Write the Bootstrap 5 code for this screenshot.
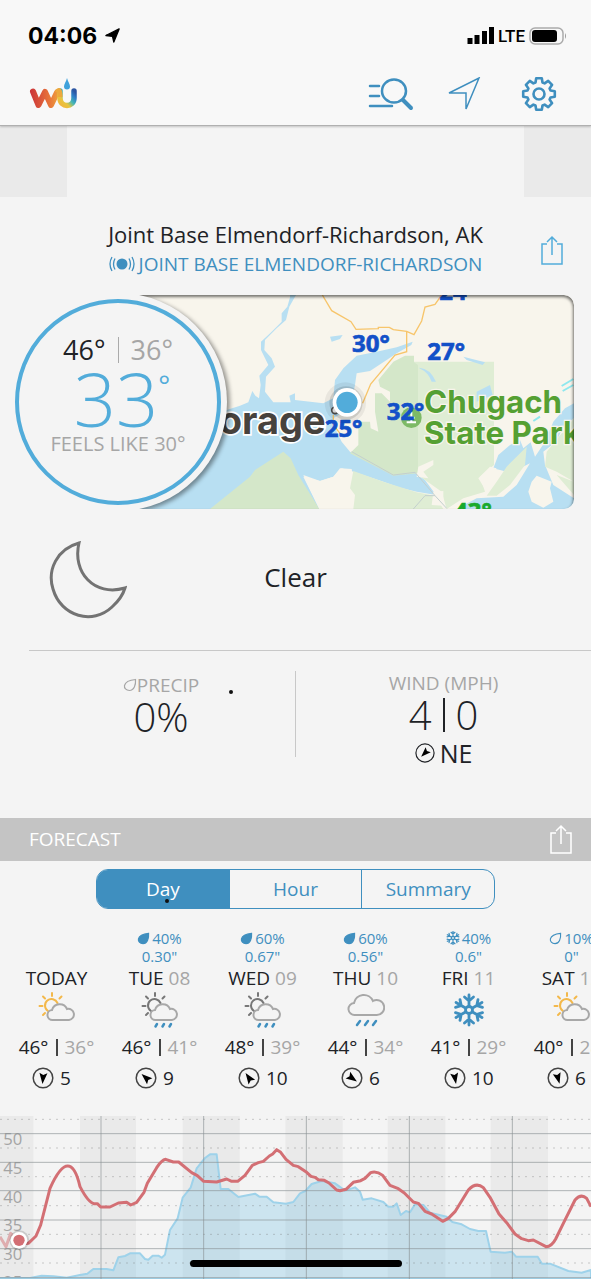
<!DOCTYPE html>
<html lang="en">
<head>
<meta charset="utf-8">
<meta name="viewport" content="width=device-width, initial-scale=1">
<title>Weather Underground</title>
<link href="https://cdn.jsdelivr.net/npm/bootstrap@5.3.0/dist/css/bootstrap.min.css" rel="stylesheet">
<script src="https://cdn.jsdelivr.net/npm/bootstrap@5.3.0/dist/js/bootstrap.bundle.min.js"></script>
<style>
:root{--blue:#3f8fbf;--sky:#52acda;--ink:#202226;--mute:#a6a6a6}
body{background:#f4f4f4;color:var(--ink);font-family:"Open Sans","Noto Sans",sans-serif;overflow-x:hidden}
svg{display:block}
.app-head{background:#f8f8f8;border-bottom:1px solid #b0b0b0;box-shadow:0 1px 2px #0003;position:relative}
.status{height:71px;padding:0 24px 0 28px}
.clock{font:700 23px/30px Inter,sans-serif;color:#000}
.lte{font:500 17px/24px Roboto,sans-serif;color:#000}
.tools{height:54px;padding:0 34px 8px 29px}
.plain{background:none;border:0;padding:0;color:var(--blue)}
.ad div{width:67px;height:71px;background:#eaeaea}
.place{padding-top:22px;height:98px}
.place h1{font-size:22px;line-height:30px;margin:0}
.place a{font-size:19px;line-height:30px;color:var(--blue);text-decoration:none}
.side{width:78px}
.hero{position:relative;padding-left:118px;padding-right:17px}
.map-box{height:214px;border-radius:0 10px 10px 0;overflow:hidden;position:relative}
.map-box::after{content:"";position:absolute;inset:0;border-radius:0 10px 10px 0;box-shadow:inset -1px 2px 3px #0008}
.dial{position:absolute;left:9px;top:-2px;width:218px;height:218px}
.dial::before{content:"";position:absolute;inset:0;border-radius:50%;background:#f4f4f4;clip-path:inset(2px -8px 2px 50%);box-shadow:3px 2px 4px #0006}
.ring{position:absolute;inset:6px;border:4px solid var(--sky);border-radius:50%}
.hilo{font-size:27px;line-height:30px;margin-top:32px;gap:12px}
.hilo i{width:1px;height:26px;background:#aaa}
.now{font-size:74px;line-height:68px;font-weight:300;color:var(--sky)}
.now small{font-size:28px;line-height:40px;font-weight:400}
.feels{font-size:20px;line-height:22px;color:var(--mute)}
.mute{color:var(--mute)}
.cond{display:grid;grid-template-columns:1fr auto 1fr;height:141px;padding-left:49px;padding-right:49px}
.cond span{font-size:26px;line-height:32px;padding-bottom:5px}
.stats{display:grid;grid-template-columns:1fr 1px 1fr;height:167px}
.rule{margin-left:29px;height:1px;background:#c8c8c8}
.split{height:86px;margin-top:20px;background:#c8c8c8}
.precip{padding:22px 0 0 27px}
.label19{font-size:19px;line-height:24px;color:var(--mute)}
.big{font-size:40px;line-height:40px;font-weight:300;gap:11px}
.big i{width:2px;height:34px;background:var(--ink)}
.dir{font-size:25px;line-height:36px;gap:5px}
.speck{position:absolute;width:4px;height:4px;border-radius:50%;background:#111}
.fc-head{background:#c4c4c4;height:43px;padding:0 19px 2px 29px}
.fc-head h2{font-size:19px;line-height:24px;color:#fff;margin:0}
.tabs{width:399px;max-width:100%;height:40px;margin:8px auto 0;border:1px solid var(--blue);border-radius:12px;overflow:hidden}
.tabs button{flex:1 1 0;border:0;background:none;color:var(--blue);font-size:19px;line-height:24px;padding:0;position:relative}
.tabs button+button{border-left:1px solid var(--blue)}
.tabs button.on{background:var(--blue);color:#fff}
.days{padding:20px 0 0 5px;height:207px;overflow:hidden}
.day{flex:0 0 103px;text-align:center}
.rain{font-size:15px;line-height:18px;height:36px;color:var(--blue)}
.rain>div{gap:2px}
.name{font-size:19px;line-height:26px}
.pic{height:38px}
.temps{font-size:19px;line-height:34px;gap:7px;padding-top:1px}
.temps i{width:2px;height:17px;background:#444}
.wind{font-size:19px;line-height:28px;gap:6px;padding-left:27px}
.chart{height:163px;position:relative;overflow:hidden}
.home-bar{position:absolute;left:0;right:0;bottom:12px;margin:auto;width:212px;height:7px;border-radius:4px;background:#000}
</style>
</head>
<body>
<svg width="0" height="0" class="position-absolute" aria-hidden="true">
 <defs>
  <symbol id="share" viewBox="0 0 22 30"><path d="M6 9H1v20h20V9h-5M11 20V2M6 7l5-5 5 5" fill="none" stroke="currentColor" stroke-width="1.5"/></symbol>
  <symbol id="drop" viewBox="0 0 14 14"><path d="M12.500 1.500C13 7 11 12.500 6.500 12.500C3 12.500 1 10 1.500 7.500C2.500 3.500 7 2 12.500 1.500Z" stroke="currentColor" stroke-width="1.200"/></symbol>
  <symbol id="flake" viewBox="-16 -16 32 32"><g fill="none" stroke="currentColor" stroke-width="2.800" stroke-linecap="round"><circle r="3.500"/><g id="arm"><path d="M0-4V-15M-4.500-13L0-9L4.500-13"/></g><use href="#arm" transform="rotate(60)"/><use href="#arm" transform="rotate(120)"/><use href="#arm" transform="rotate(180)"/><use href="#arm" transform="rotate(240)"/><use href="#arm" transform="rotate(300)"/></g></symbol>
  <symbol id="sun" viewBox="0 0 38 38"><g fill="none" stroke="currentColor" stroke-width="2" stroke-linecap="round"><path d="M10 20A6.500 6.500 0 1 1 19.500 12"/><path d="M14 2V5M5 5.500L7 7.500M1.500 15H4.500M5 24L7 22M21.500 7.500L23.500 5.500"/></g></symbol>
  <symbol id="cloud" viewBox="0 0 38 38"><path d="M15 29a5 5 0 0 1-1-10a8 8 0 0 1 15-1a5.600 5.600 0 1 1 2 11Z" fill="#f4f4f4" stroke="#a8a8a8" stroke-width="2"/></symbol>
  <symbol id="drops" viewBox="0 0 38 38"><path d="M16 33L14.500 35.500M23 33L21.500 35.500M30 33L28.500 35.500" stroke="#3f8fbf" stroke-width="2.500" stroke-linecap="round"/></symbol>
  <linearGradient id="wg" gradientUnits="userSpaceOnUse" x1="0" y1="0" x2="34" y2="0"><stop stop-color="#c9303a"/><stop offset=".6" stop-color="#e8743a"/><stop offset="1" stop-color="#f2b63e"/></linearGradient>
  <linearGradient id="ug" x1="0" y1="1" x2="1" y2="0"><stop stop-color="#f2b63e"/><stop offset=".3" stop-color="#e6c53f"/><stop offset=".55" stop-color="#45b8b5"/><stop offset=".8" stop-color="#2f7fc8"/><stop offset="1" stop-color="#2c56a2"/></linearGradient>
 </defs>
</svg>

<header class="app-head">
 <div class="status d-flex align-items-center justify-content-between">
  <div class="d-flex align-items-center gap-2"><span class="clock">04:06</span>
   <svg width="15" height="15" viewBox="0 0 17 17"><path d="M16 1L10 16L8.500 9.500L1 8.500Z" stroke="#000" stroke-width="1.500" stroke-linejoin="round"/></svg></div>
  <div class="d-flex align-items-center gap-1">
   <svg width="27" height="17" viewBox="0 0 27 17"><path d="M3 17V11M10 17V8M17.500 17V4M24.500 17V0" stroke="#000" stroke-width="5"/></svg>
   <span class="lte">LTE</span>
   <svg width="38" height="18" viewBox="0 0 38 18"><rect x="1" y="1" width="33" height="16" rx="5" fill="none" stroke="#aaa" stroke-width="1.500"/><rect x="3" y="3" width="25" height="12" rx="3"/><path d="M36 6q2 3 0 6Z" fill="#999"/></svg>
  </div>
 </div>
 <nav class="tools d-flex align-items-center">
  <a href="#" class="me-auto" aria-label="Home"><svg width="49" height="34" viewBox="0 0 49 34"><path d="M4 14.500L9.500 28L16 15L22 28L28 15.500" fill="none" stroke="url(#wg)" stroke-width="6" stroke-linecap="round" stroke-linejoin="round"/><path d="M31 14V21C31 31 45 31 45 21V14" fill="none" stroke="url(#ug)" stroke-width="5.500" stroke-linecap="round"/><path d="M28 15.500Q31 10 31 20" fill="none" stroke="#eda83c" stroke-width="5"/><path d="M38 1C39 5 41 7 41 9.500a3 3 0 0 1-6 0C35 7 37 5 38 1Z" fill="#3fa2dc"/></svg></a>
  <button class="plain" aria-label="Search"><svg width="46" height="34" viewBox="0 0 46 34" fill="none" stroke="currentColor" stroke-width="2.500" stroke-linecap="round"><path d="M2 9H11M2 19H11M2 29H24"/><ellipse cx="26" cy="14" rx="12" ry="11.500"/><path d="M35 23L43 31" stroke-width="4"/></svg></button>
  <button class="plain ms-4 me-5 ps-2" aria-label="Locate"><svg width="35" height="34" viewBox="0 0 35 34" fill="none" stroke="currentColor" stroke-width="1.500"><path d="M33 1L20 32V16H3Z"/></svg></button>
  <button class="plain" aria-label="Settings" style="margin-left:-8px"><svg width="36" height="36" viewBox="-18 -18 36 36" fill="none" stroke="currentColor" stroke-width="2.600" stroke-linejoin="round"><path d="M-2.800-15.800H2.800L3.500-11.500L5.600-10.600L9.200-13.100L13.100-9.200L10.600-5.600L11.500-3.500L15.800-2.800V2.800L11.500 3.500L10.600 5.600L13.100 9.200L9.200 13.100L5.600 10.600L3.500 11.500L2.800 15.800H-2.800L-3.500 11.500L-5.600 10.600L-9.200 13.100L-13.100 9.200L-10.600 5.600L-11.500 3.500L-15.800 2.800V-2.800L-11.500-3.500L-10.600-5.600L-13.100-9.200L-9.200-13.100L-5.600-10.600L-3.500-11.500Z"/><circle r="5.500"/></svg></button>
 </nav>
</header>

<main>
 <div class="ad d-flex justify-content-between"><div></div><div></div></div>

 <section class="place d-flex">
  <div class="side"></div>
  <div class="flex-fill text-center text-nowrap">
   <h1>Joint Base Elmendorf-Richardson, AK</h1>
   <a href="#" class="d-flex align-items-center justify-content-center gap-1"><svg width="26" height="16" viewBox="0 0 26 16"><circle cx="13" cy="8" r="5.500" fill="currentColor"/><path d="M6 2.500Q3 8 6 13.500M3 1Q-1 8 3 15M20 2.500Q23 8 20 13.500M23 1Q27 8 23 15" fill="none" stroke="currentColor" stroke-width="1.300"/></svg>JOINT BASE ELMENDORF-RICHARDSON</a>
  </div>
  <button class="plain side d-flex justify-content-center pt-3" aria-label="Share" style="color:var(--sky)"><svg width="22" height="30"><use href="#share"/></svg></button>
 </section>

 <section class="hero">
  <div class="map-box">
   <svg width="100%" height="214" viewBox="354 30 1368 642" preserveAspectRatio="xMinYMin slice" font-family="Open Sans, sans-serif" font-weight="700">
    <rect x="354" y="30" width="4000" height="642" fill="#f8f5ec"/>
    <path fill="#b8dff2" d="M354 400L680 375L720 362L745 352L757 318L766 332L777 340L782 300L778 272L805 240L783 195L783 170L815 140L845 110L845 85L862 65L872 30H888L868 65L858 105L830 130L795 165L793 195L815 220L825 245L798 275L795 320L820 352L872 352L868 332L885 325L885 345L970 355L1000 340L1005 285L1030 250L1070 212L1130 200L1190 187L1238 170L1234 180L1190 205L1160 225L1110 258L1070 265L1065 300L1050 370L1000 400L1010 440L1025 470L1050 500L1100 525L1175 568L1240 560L1275 585L1308 630L1250 620L1200 608L1150 590L1060 560L1025 550L1000 575L960 588L910 570L958 672H354Z"/>
    <path fill="#d4e7c9" d="M630 672L750 575L765 555L850 500L872 520L895 570L958 672Z"/>
    <g transform="translate(870 0)">
     <path fill="#f8f5ec" d="M40 575L90 588L130 575L150 550L185 552L190 580L180 610L195 630L190 672H88Z"/>
     <path fill="#dfedd4" d="M190 558L280 590L380 622L435 632L460 672H190L195 630L180 610ZM372 230H612V540L570 575L585 620L520 640L470 672L455 620L384 570Z"/>
     <path fill="#d4e7c9" d="M265 285L310 230L345 212H372V232L384 240V565L310 572L180 505L205 480L205 410L240 410L242 430L265 440L255 380V325L275 325L300 350L300 320L270 305Z"/>
     <path fill="#b8dff2" d="M610 550L625 510L660 480L690 465L700 490L722 472L735 515L765 470L790 410L825 370L852 355V400L820 425L798 470L760 500L765 540L790 600L852 640V672H500L560 640L640 635L680 600L720 535L690 550L650 560L630 555ZM388 248Q420 250 438 290H425Q415 262 388 250ZM520 215L585 232L578 240L530 225ZM120 155L158 150L150 162L125 170ZM560 320L600 300L608 330L560 350ZM0 40L18 30H0Z"/>
     <path fill="#dfedd4" d="M620 590L650 545L710 485L705 540L660 600L620 632H590ZM770 500L852 400V590L800 560L765 545ZM800 570L852 590V630Z"/>
     <path fill="#f8f5ec" d="M725 590L740 572L785 590L780 610L790 650L760 668L725 650L715 620ZM380 575L385 545L430 525L430 540L400 560L415 580ZM430 620L460 618V662L425 660ZM565 580L600 545L620 550L580 595L590 620Z"/>
     <g fill="none"><path d="M97 30L125 77L183 110L198 133L265 131V127H298L310 134L350 139L372 149L395 108L405 66L435 58L455 30M350 139V200L315 210L242 297L218 355M130 390V420L150 445" stroke="#f7c56b" stroke-width="4"/><path d="M185 500L235 528L310 570L375 562L435 632L470 670M435 632H405L370 672" stroke="#c3cfce" stroke-width="3"/><path d="M815 303L850 282M818 318L850 300M730 408L750 395" stroke="#8fe8ee" stroke-width="6"/></g>
     <circle cx="364" cy="398" r="31" fill="#7dba66"/><path d="M364 380v34M350 412h28M354 398h20" stroke="#fff" stroke-width="6"/>
     <g fill="#55a033" stroke="#f8f5ec" stroke-width="8" paint-order="stroke" font-size="94" font-family="Inter, sans-serif"><text x="402" y="383">Chugach</text><text x="402" y="478">State Park</text></g>
    </g>
    <text x="656" y="446" font-size="114" font-family="Inter, sans-serif" fill="#47423d" stroke="#fff" stroke-width="10" paint-order="stroke">orage</text>
    <g transform="translate(870 0)">
     <circle cx="135" cy="376" r="10" fill="#fff" stroke="#555" stroke-width="5"/>
     <g fill="#1250c8" stroke="#1250c8" stroke-width="2" font-size="72"><text x="186" y="202">30°</text><text x="412" y="226">27°</text><text x="290" y="404">32°</text><text x="104" y="456">25°</text><text x="448" y="46">24°</text><text x="492" y="706" fill="#1aaa2c" stroke="#1aaa2c">43°</text></g>
     <circle cx="166" cy="354" r="62" fill="#000" opacity=".06"/><circle cx="168" cy="354" r="50" fill="#000" opacity=".12"/><circle cx="171" cy="352" r="43" fill="#fff"/><circle cx="171" cy="352" r="32" fill="#52acda"/>
    </g>
   </svg>
  </div>
  <div class="dial"><div class="ring d-flex flex-column align-items-center">
   <div class="hilo d-flex align-items-center"><span>46°</span><i></i><span class="mute">36°</span></div>
   <div class="now d-flex ps-2">33<small>°</small></div>
   <div class="feels text-nowrap">FEELS LIKE 30°</div>
  </div></div>
 </section>

 <section class="cond align-items-center">
  <svg width="78" height="78" viewBox="0 0 78 78"><path d="M30 2C8 8-2 29 4 48C12 76 44 84 63 66Q73 57 76 47C45 56 23 31 30 2Z" fill="none" stroke="#737373" stroke-width="3"/></svg>
  <span>Clear</span>
 </section>

 <div class="rule"></div>
 <section class="stats position-relative">
  <div class="precip d-flex flex-column align-items-center">
   <div class="label19 d-flex align-items-center"><svg width="14" height="14" fill="none"><use href="#drop"/></svg>PRECIP</div>
   <div class="big">0%</div>
   <span class="speck" style="left:229px;top:39px"></span>
  </div>
  <div class="split"></div>
  <div class="d-flex flex-column align-items-center" style="padding-top:20px">
   <div class="label19">WIND (MPH)</div>
   <div class="big d-flex align-items-center"><span>4</span><i></i><span>0</span></div>
   <div class="dir d-flex align-items-center"><svg width="20" height="20" viewBox="-11 -11 22 22"><circle r="10" fill="none" stroke="currentColor" stroke-width="1.300"/><path d="M0-6L4 5L0 3L-4 5Z" transform="rotate(225)"/></svg>NE</div>
  </div>
 </section>

 <section>
  <div class="fc-head d-flex align-items-center justify-content-between"><h2>FORECAST</h2><button class="plain text-white" aria-label="Share forecast"><svg width="22" height="30"><use href="#share"/></svg></button></div>
  <div class="tabs d-flex"><button class="on">Day<span class="speck" style="left:68px;bottom:5px"></span></button><button>Hour</button><button>Summary</button></div>

  <div class="days d-flex">
   <div class="day"><div class="rain"></div><div class="name">TODAY</div>
    <svg class="pic mx-auto" width="38" height="38"><use href="#sun" color="#f3b84a"/><use href="#cloud"/></svg>
    <div class="temps d-flex align-items-center justify-content-center"><span>46°</span><i></i><span class="mute">36°</span></div>
    <div class="wind d-flex align-items-center"><svg width="22" height="22" viewBox="-11 -11 22 22"><circle r="9.800" fill="none" stroke="#444" stroke-width="1.500"/><path d="M0-6L4 5L0 3L-4 5Z" transform="rotate(185)"/></svg>5</div></div>
   <div class="day"><div class="rain"><div class="d-flex align-items-center justify-content-center"><svg width="13" height="13" fill="currentColor"><use href="#drop"/></svg>40%</div>0.30"</div><div class="name">TUE <span class="mute">08</span></div>
    <svg class="pic mx-auto" width="38" height="38"><use href="#sun" color="#777"/><use href="#cloud"/><use href="#drops"/></svg>
    <div class="temps d-flex align-items-center justify-content-center"><span>46°</span><i></i><span class="mute">41°</span></div>
    <div class="wind d-flex align-items-center"><svg width="22" height="22" viewBox="-11 -11 22 22"><circle r="9.800" fill="none" stroke="#444" stroke-width="1.500"/><path d="M0-6L4 5L0 3L-4 5Z" transform="rotate(-48)"/></svg>9</div></div>
   <div class="day"><div class="rain"><div class="d-flex align-items-center justify-content-center"><svg width="13" height="13" fill="currentColor"><use href="#drop"/></svg>60%</div>0.67"</div><div class="name">WED <span class="mute">09</span></div>
    <svg class="pic mx-auto" width="38" height="38"><use href="#sun" color="#777"/><use href="#cloud"/><use href="#drops"/></svg>
    <div class="temps d-flex align-items-center justify-content-center"><span>48°</span><i></i><span class="mute">39°</span></div>
    <div class="wind d-flex align-items-center"><svg width="22" height="22" viewBox="-11 -11 22 22"><circle r="9.800" fill="none" stroke="#444" stroke-width="1.500"/><path d="M0-6L4 5L0 3L-4 5Z" transform="rotate(-35)"/></svg>10</div></div>
   <div class="day"><div class="rain"><div class="d-flex align-items-center justify-content-center"><svg width="13" height="13" fill="currentColor"><use href="#drop"/></svg>60%</div>0.56"</div><div class="name">THU <span class="mute">10</span></div>
    <svg class="pic mx-auto" width="38" height="38" viewBox="0 0 38 38"><path d="M8 24a6 6 0 0 1-1-12a10 10 0 0 1 19-2a7.500 7.500 0 1 1 3 14Z" fill="none" stroke="#a8a8a8" stroke-width="2"/><path d="M13 30L10 34M21 30L18 34M29 30L26 34" stroke="#3f8fbf" stroke-width="2.500" stroke-linecap="round"/></svg>
    <div class="temps d-flex align-items-center justify-content-center"><span>44°</span><i></i><span class="mute">34°</span></div>
    <div class="wind d-flex align-items-center"><svg width="22" height="22" viewBox="-11 -11 22 22"><circle r="9.800" fill="none" stroke="#444" stroke-width="1.500"/><path d="M0-6L4 5L0 3L-4 5Z" transform="rotate(125)"/></svg>6</div></div>
   <div class="day"><div class="rain"><div class="d-flex align-items-center justify-content-center"><svg width="14" height="14"><use href="#flake"/></svg>40%</div>0.6"</div><div class="name">FRI <span class="mute">11</span></div>
    <svg class="pic mx-auto" width="32" height="38" style="color:var(--blue)"><use href="#flake"/></svg>
    <div class="temps d-flex align-items-center justify-content-center"><span>41°</span><i></i><span class="mute">29°</span></div>
    <div class="wind d-flex align-items-center"><svg width="22" height="22" viewBox="-11 -11 22 22"><circle r="9.800" fill="none" stroke="#444" stroke-width="1.500"/><path d="M0-6L4 5L0 3L-4 5Z" transform="rotate(170)"/></svg>10</div></div>
   <div class="day"><div class="rain"><div class="d-flex align-items-center justify-content-center"><svg width="13" height="13" fill="none"><use href="#drop"/></svg>10%</div>0"</div><div class="name">SAT <span class="mute">12</span></div>
    <svg class="pic mx-auto" width="38" height="38"><use href="#sun" color="#f3b84a"/><use href="#cloud"/></svg>
    <div class="temps d-flex align-items-center justify-content-center"><span>40°</span><i></i><span class="mute">28°</span></div>
    <div class="wind d-flex align-items-center"><svg width="22" height="22" viewBox="-11 -11 22 22"><circle r="9.800" fill="none" stroke="#444" stroke-width="1.500"/><path d="M0-6L4 5L0 3L-4 5Z" transform="rotate(165)"/></svg>6</div></div>
  </div>

  <div class="chart">
   <svg width="100%" height="163" viewBox="0 48 1773 489" preserveAspectRatio="xMinYMin slice" stroke-linejoin="round">
    <path fill="#eaeaea" d="M0 48H100V537H0ZM240 48H408V537H240ZM548 48H719V537H548ZM856 48H1028V537H856ZM1163 48H1336V537H1163ZM1472 48H1644V537H1472Z"/>
    <g font-family="Open Sans, sans-serif" font-size="50" fill="#a4a4a4"><text x="10" y="136">50</text><text x="10" y="222">45</text><text x="10" y="308">40</text><text x="10" y="394">35</text><text x="10" y="480">30</text><text x="10" y="565">25</text></g>
    <path d="M0 534L90 534L125 527L160 529L200 533L240 525L262 521L280 507L320 507L340 511L355 472L375 468L390 460L420 460L435 477L445 479L458 467H475L485 473L495 464L510 390L533 355L548 293L572 263L590 205L615 174L630 163H650L662 267H685L715 291L765 281L778 290H800L820 307L858 311L880 306L900 280L916 273L935 252L965 243L1005 250L1035 272L1065 262L1080 275L1088 299L1115 295L1150 306L1165 320H1180L1190 310L1202 345L1218 333L1230 337L1245 313L1270 315L1290 338L1340 350L1357 366L1385 373L1410 387L1435 393H1458L1472 455L1515 458L1535 455L1548 470H1613L1626 491H1650L1705 513L1745 518L1773 510V537H0Z" fill="#84c8e6" fill-opacity=".36" stroke="#9ed2ea" stroke-width="6"/>
    <path d="M0 58H1773M0 144H1773M0 230H1773M0 317H1773M0 403H1773M0 489H1773" stroke="#777" stroke-opacity=".55" stroke-width="2" stroke-dasharray="6 15"/>
    <path d="M0 101H1773M0 187H1773M0 272H1773M0 360H1773M0 446H1773M0 533H1773M303 48V537M611 48V537M919 48V537M1228 48V537M1537 48V537" stroke="#8a9094" stroke-opacity=".65" stroke-width="3"/>
    <g fill="none" stroke="#d36f74" stroke-width="9"><path opacity=".5" d="M0 410L18 440L32 400L42 410"/><path d="M58 432L85 430L108 408L122 375L150 265Q180 198 203 198T240 260Q265 308 282 311H292L302 321H330L355 309L380 307L392 315L410 307L432 277L442 250L470 203Q485 180 497 178L520 186H536L575 218L592 227L611 244L650 246L680 237L695 244H713L735 226L757 196L775 188L790 184L808 168L818 162L830 149L842 157L858 178L880 196L895 200L920 217L933 229L945 232L955 239L973 241L987 249L1010 270L1020 272L1038 268L1060 247L1082 242L1095 235L1112 218Q1130 212 1148 226L1170 256L1195 266L1213 279L1240 306L1255 310L1275 334L1295 342L1310 352L1328 364L1345 355L1365 335L1405 270Q1428 245 1450 263L1470 292L1497 342L1520 368L1545 402L1565 416L1585 422L1600 420L1638 440Q1655 440 1667 417L1690 370L1725 300Q1743 280 1760 295L1773 320"/></g>
    <circle cx="58" cy="421" r="30" fill="#0002"/><circle cx="57" cy="421" r="25" fill="#fff"/><circle cx="57" cy="421" r="17" fill="#d36f74"/>
   </svg>
   <div class="home-bar"></div>
  </div>
 </section>
</main>
</body>
</html>
